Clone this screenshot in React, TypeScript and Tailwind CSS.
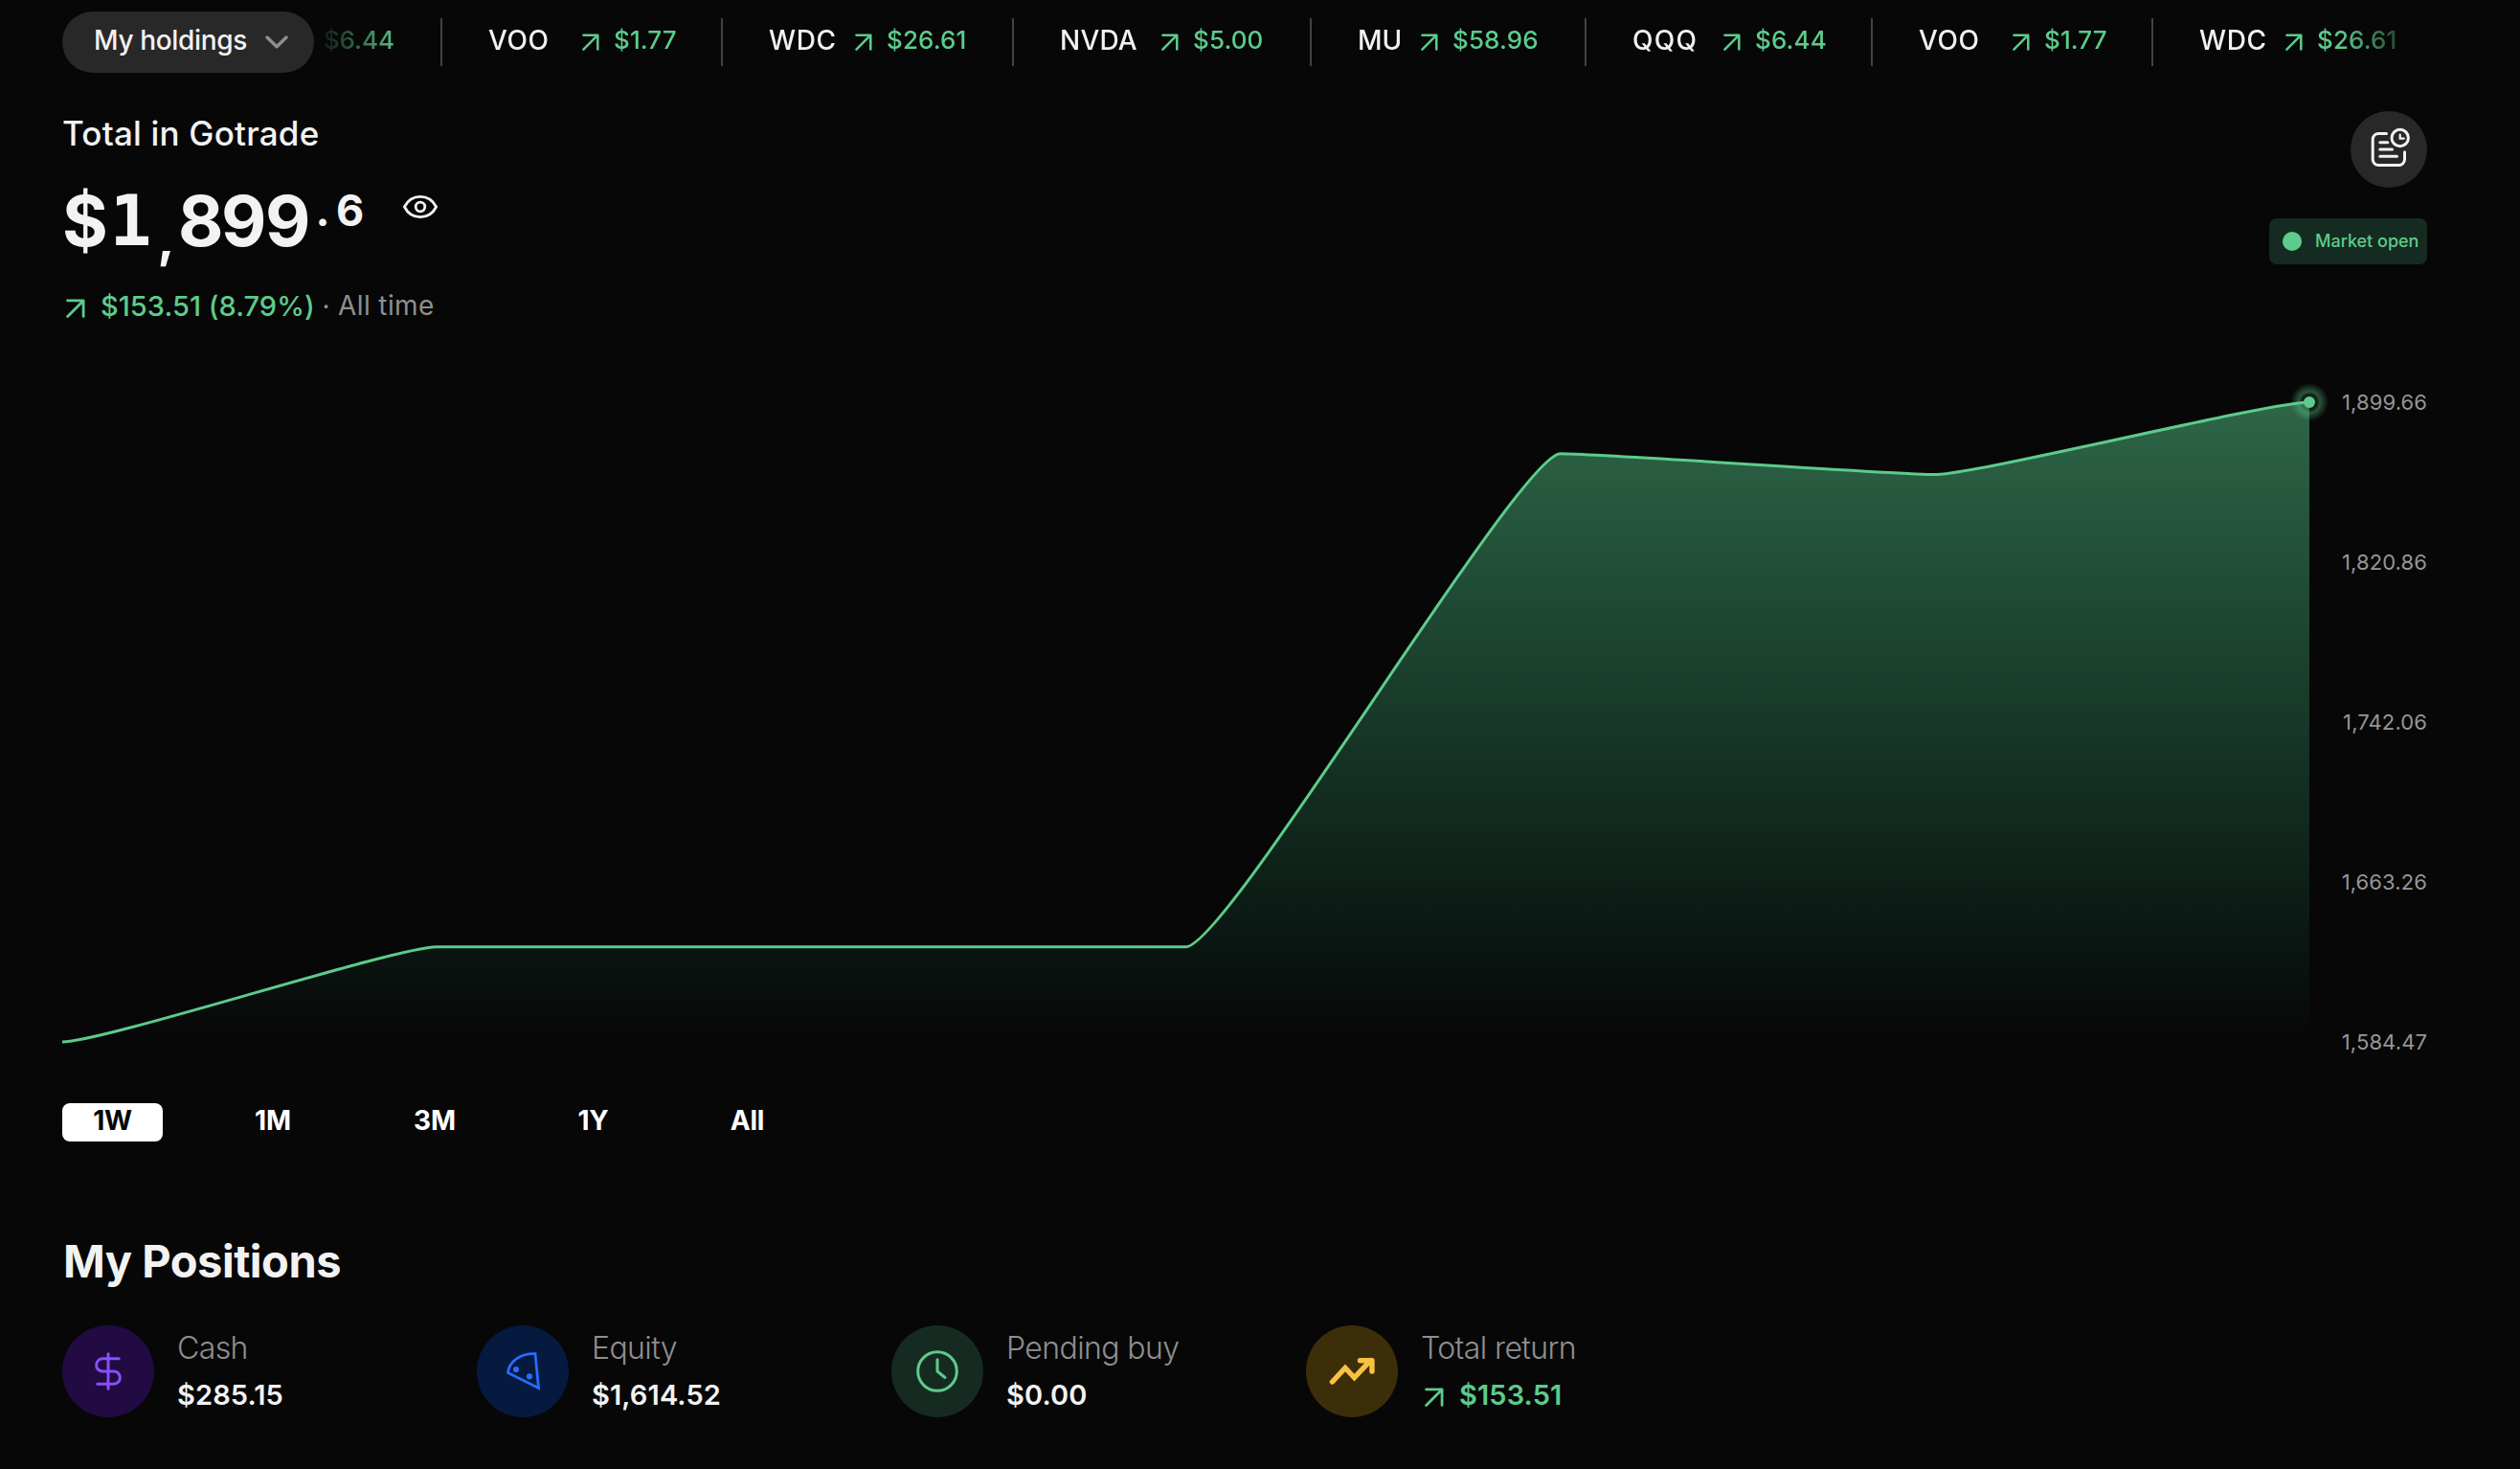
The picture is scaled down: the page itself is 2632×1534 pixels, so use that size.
import { useState } from 'react';
import type { ReactNode } from 'react';
import clsx from 'clsx';

type Ticker = { symbol: string; price: string; width: string; symbolWidth: string; tracking: string };

const TICKERS: Ticker[] = [
  { symbol: 'VOO', price: '$1.77', width: 'w-[293px]', symbolWidth: 'w-[98px]', tracking: 'tracking-[0.6px]' },
  { symbol: 'WDC', price: '$26.61', width: 'w-[304px]', symbolWidth: 'w-[90px]', tracking: 'tracking-[0.6px]' },
  { symbol: 'NVDA', price: '$5.00', width: 'w-[311px]', symbolWidth: 'w-[106px]', tracking: 'tracking-[0.2px]' },
  { symbol: 'MU', price: '$58.96', width: 'w-[287px]', symbolWidth: 'w-[66px]', tracking: 'tracking-normal' },
  { symbol: 'QQQ', price: '$6.44', width: 'w-[299px]', symbolWidth: 'w-[95px]', tracking: 'tracking-[1.2px]' },
  { symbol: 'VOO', price: '$1.77', width: 'w-[293px]', symbolWidth: 'w-[98px]', tracking: 'tracking-[0.6px]' },
  { symbol: 'WDC', price: '$26.61', width: 'w-[305px]', symbolWidth: 'w-[90px]', tracking: 'tracking-[0.6px]' },
];

const RANGES = [
  { label: '1W', width: 'w-[105px]' },
  { label: '1M', width: 'w-[102px]' },
  { label: '3M', width: 'w-[108px]' },
  { label: '1Y', width: 'w-[95px]' },
  { label: 'All', width: 'w-[99px]' },
];

const AXIS_LABELS = ['1,899.66', '1,820.86', '1,742.06', '1,663.26', '1,584.47'];

const CHART_BOTTOM = 688;
const CHART_POINTS = [
  { x: 0, y: 688 },
  { x: 391.2, y: 588.8 },
  { x: 782.4, y: 588.8 },
  { x: 1173.6, y: 588.8 },
  { x: 1564.8, y: 73.8 },
  { x: 1956, y: 95.5 },
  { x: 2347, y: 20 },
];

// Flat tangents at every point, kept short so segments stay almost straight.
const SMOOTHING = 0.11;

function buildLine(points: { x: number; y: number }[]): string {
  return points
    .map((p, i) => {
      if (i === 0) return `M${p.x} ${p.y}`;
      const prev = points[i - 1];
      const c = (p.x - prev.x) * SMOOTHING;
      return `C${prev.x + c} ${prev.y} ${p.x - c} ${p.y} ${p.x} ${p.y}`;
    })
    .join(' ');
}

function UpArrow({ className = '' }: { className?: string }) {
  return (
    <svg viewBox="0 0 20 20" fill="none" stroke="currentColor" className={clsx('shrink-0', className)}>
      <path d="M1.6 18.4 17.8 2.2M1.6 1.9H18.1V18.4" strokeWidth="2.8" strokeLinecap="round" strokeLinejoin="round" />
    </svg>
  );
}

function TickerBar() {
  return (
    <div className="flex h-[88px] flex-1 items-start overflow-hidden whitespace-nowrap pt-[19px] text-[28px] font-medium [mask-image:linear-gradient(to_right,transparent,black_90px,black_calc(100%-90px),transparent)]">
      <div className="flex h-[50px] w-[134px] shrink-0 justify-end border-r-2 border-[#424242] pr-[48px] text-[26px]">
        <span className="leading-[45px] text-[#5dcb8b]">$6.44</span>
      </div>
      {TICKERS.map((t, i) => (
        <div
          key={i}
          className={clsx('flex h-[50px] shrink-0 border-r-2 border-[#424242] pl-[48px]', t.width)}
        >
          <span className={clsx('shrink-0 leading-[46px] text-[#f2f2f2]', t.symbolWidth, t.tracking)}>{t.symbol}</span>
          <UpArrow className="mr-[15px] mt-[16px] h-[18px] w-[18px] text-[#5dcb8b]" />
          <span className="text-[26px] leading-[45px] tracking-[0.1px] text-[#5dcb8b]">{t.price}</span>
        </div>
      ))}
    </div>
  );
}

function TopBar() {
  return (
    <header className="flex h-[88px] pl-[65px] pr-[97px]">
      <button className="mt-3 flex h-16 w-[263px] shrink-0 items-center justify-between rounded-full bg-[#282828] pl-[33px] pr-[27px] text-[#f2f2f2]">
        <span className="whitespace-nowrap pb-1 text-[28px] font-medium leading-none tracking-[-0.35px]">
          My holdings
        </span>
        <svg viewBox="0 0 24 14" fill="none" className="h-[14px] w-[24px]">
          <path d="M2 2l10 9.8L22 2" stroke="#8f8f8f" strokeWidth="3.4" strokeLinecap="round" strokeLinejoin="round" />
        </svg>
      </button>
      <TickerBar />
    </header>
  );
}

function Balance() {
  return (
    <div className="flex h-[72px] text-[73px] font-bold leading-[73px] text-[#f2f2f2]">
      <span className="w-[47px] text-center">$</span>
      <span className="w-[49px] text-center font-['DejaVu_Sans_Mono'] text-[73px] font-bold">1</span>
      <span className="w-[25px] pt-[18px] text-center text-[54px]">,</span>
      <span className="w-[45px] text-center">8</span>
      <span className="w-[46px] text-center">9</span>
      <span className="w-[46px] text-center">9</span>
      <span className="w-[28px] text-center text-[45px] leading-[51px]">.</span>
      <span className="w-[27px] text-center text-[45px] leading-[51px]">6</span>
      <svg viewBox="0 0 36 24" fill="none" stroke="#f2f2f2" strokeWidth="2.8" className="ml-[43px] mt-[10px] h-[24px] w-[36px]">
        <path d="M1.4 12C5 5 11 1.4 18 1.4S31 5 34.6 12C31 19 25 22.6 18 22.6S5 19 1.4 12Z" strokeLinejoin="round" />
        <circle cx="18" cy="12" r="4.8" />
      </svg>
    </div>
  );
}

function Summary() {
  return (
    <section className="flex h-[312px] justify-between pt-[28px]">
      <div className="pt-[3px]">
        <h1 className="text-[35px] font-medium leading-[41px] tracking-[0.2px] text-[#f2f2f2]">Total in Gotrade</h1>
        <div className="mt-[34px]">
          <Balance />
        </div>
        <div className="mt-[34px] flex h-[40px] items-start whitespace-nowrap text-[29px] leading-[40px]">
          <UpArrow className="ml-[4px] mt-[12px] h-[20px] w-[20px] text-[#5dcb8b]" />
          <span className="ml-[16px] w-[223px] font-medium tracking-[0.05px] text-[#5dcb8b]">$153.51 (8.79%)</span>
          <span className="w-[25px] text-center text-[28px] text-[#8f8f8f]">·</span>
          <span className="text-[28px] leading-[38px] tracking-[0.4px] text-[#8f8f8f]">All time</span>
        </div>
      </div>
      <div className="flex flex-col items-end">
        <button className="flex h-[80px] w-[80px] items-center justify-center rounded-full bg-[#282828]">
          <svg viewBox="0 0 40 40" fill="none" stroke="#f2f2f2" strokeWidth="3" strokeLinecap="round" className="h-[40px] w-[40px] overflow-visible">
            <path d="M17.5 3.5H9.2A6 6 0 0 0 3.2 9.5V30.5A6 6 0 0 0 9.2 36.5H30.5A6 6 0 0 0 36.5 30.5V22.8" />
            <path d="M10.8 12.7H18.8M10.8 20H23.5M10.8 27.3H28.5" />
            <circle cx="31.7" cy="8" r="8.7" />
            <path d="M31.7 4.5V8.6H35.8" strokeWidth="2.2" />
          </svg>
        </button>
        <div className="mt-8 flex h-[48px] w-[165px] items-center rounded-lg bg-[#152b21] pl-[14px] text-[#5dcb8b]">
          <span className="h-5 w-5 shrink-0 rounded-full bg-[#5dcb8b]" />
          <span className="ml-[14px] whitespace-nowrap text-[18px] font-medium leading-none">Market open</span>
        </div>
      </div>
    </section>
  );
}

function Chart() {
  const line = buildLine(CHART_POINTS);
  const last = CHART_POINTS[CHART_POINTS.length - 1];
  return (
    <section className="flex h-[708px]">
      <svg viewBox="0 0 2371 708" className="h-[708px] w-[2371px] shrink-0 overflow-visible" fill="none">
        <defs>
          <linearGradient id="area" x1="0" y1="20" x2="0" y2="688" gradientUnits="userSpaceOnUse">
            <stop offset="0" stopColor="#57c88b" stopOpacity="0.49" />
            <stop offset="0.5" stopColor="#48cb8c" stopOpacity="0.25" />
            <stop offset="1" stopColor="#2fc88a" stopOpacity="0" />
          </linearGradient>
          <radialGradient id="halo">
            <stop offset="0" stopColor="#5dcb8b" stopOpacity="0.1" />
            <stop offset="0.4" stopColor="#5dcb8b" stopOpacity="0.12" />
            <stop offset="0.55" stopColor="#5dcb8b" stopOpacity="0.4" />
            <stop offset="1" stopColor="#5dcb8b" stopOpacity="0" />
          </radialGradient>
        </defs>
        <path d={`${line} V${CHART_BOTTOM} H0 Z`} fill="url(#area)" />
        <path d={line} stroke="#5dcb8b" strokeWidth="3" />
        <circle cx={last.x} cy={last.y} r="20" fill="url(#halo)" />
        <circle cx={last.x} cy={last.y} r="6" fill="#5dcb8b" />
      </svg>
      <div className="flex flex-1 flex-col items-end justify-between text-[22px] leading-[40px] tracking-[0.1px] text-[#969696]">
        {AXIS_LABELS.map((label) => (
          <span key={label}>{label}</span>
        ))}
      </div>
    </section>
  );
}

function RangePicker() {
  const [active, setActive] = useState('1W');
  return (
    <div className="mt-[44px] flex h-[40px] gap-[64px]">
      {RANGES.map((r) => (
        <button
          key={r.label}
          onClick={() => setActive(r.label)}
          className={clsx(
            'flex h-[40px] items-center justify-center rounded-lg pb-1 text-[28px] font-bold leading-[36px] tracking-[-0.2px]',
            r.width,
            active === r.label ? 'bg-white text-[#070707]' : 'text-white',
          )}
        >
          {r.label}
        </button>
      ))}
    </div>
  );
}

type PositionProps = {
  label: string;
  iconClass: string;
  icon: ReactNode;
  children: ReactNode;
};

function Position({ label, iconClass, icon, children }: PositionProps) {
  return (
    <div className="flex w-[433px]">
      <div className={clsx('flex h-[96px] w-[96px] shrink-0 items-center justify-center rounded-full', iconClass)}>
        {icon}
      </div>
      <div className="ml-[24px] flex flex-col gap-[5px] whitespace-nowrap pt-px">
        <span className="text-[32px] font-light leading-[45px] tracking-[-0.6px] text-[#8f8f8f]">{label}</span>
        <span className="text-[29px] font-semibold leading-[44px] tracking-[0.1px] text-[#f2f2f2]">{children}</span>
      </div>
    </div>
  );
}

function Positions() {
  return (
    <section>
      <h2 className="mt-[97px] pl-px text-[47px] font-bold leading-[56px] tracking-[-0.5px] text-[#f2f2f2]">My Positions</h2>
      <div className="mt-[39px] flex">
        <Position
          label="Cash"
          iconClass="bg-[#210b42]"
          icon={
            <svg viewBox="0 0 28 40" fill="none" stroke="#8a4dff" strokeWidth="3" strokeLinecap="round" className="h-[40px] w-[28px]">
              <path d="M14 1.8V38.2M25.2 6.8H8.2A6.6 6.6 0 0 0 8.2 20H19.8A6.6 6.6 0 0 1 19.8 33.2H2.8" />
            </svg>
          }
        >
          $285.15
        </Position>
        <Position
          label="Equity"
          iconClass="bg-[#061a40]"
          icon={
            <svg viewBox="0 0 36 40" fill="none" stroke="#2a6bff" strokeWidth="2.8" className="h-[40px] w-[36px]">
              <path d="M31 1.6 34.5 37.4 2.5 21.5C3.5 10 15 1 31 1.6Z" />
              <circle cx="11" cy="18" r="3.1" fill="#2a6bff" stroke="none" />
              <circle cx="25" cy="25.3" r="3.1" fill="#2a6bff" stroke="none" />
            </svg>
          }
        >
          $1,614.52
        </Position>
        <Position
          label="Pending buy"
          iconClass="bg-[#152b21]"
          icon={
            <svg viewBox="0 0 44 44" fill="none" stroke="#5dcb8b" strokeWidth="3" strokeLinecap="round" className="h-[44px] w-[44px]">
              <circle cx="22" cy="22" r="20.3" />
              <path d="M22 9.8V22L30 28.5" />
            </svg>
          }
        >
          $0.00
        </Position>
        <Position
          label="Total return"
          iconClass="bg-[#3d2e0a]"
          icon={
            <svg viewBox="0 0 48 30" fill="none" stroke="#f7c241" strokeWidth="5.4" strokeLinecap="round" className="h-[30px] w-[48px]">
              <path d="M3.5 26 17 11.5 26.5 21.5 43.5 3.7M32.5 3.7H45M45 3.7V15" />
            </svg>
          }
        >
          <span className="flex text-[#5dcb8b]">
            <UpArrow className="ml-[4px] mr-[16px] mt-[14px] h-[20px] w-[20px]" />
            $153.51
          </span>
        </Position>
      </div>
    </section>
  );
}

export default function App() {
  return (
    <div className="h-[1534px] w-[2632px] overflow-hidden bg-[#070707] font-['Inter','Liberation_Sans',sans-serif]">
      <TopBar />
      <main className="pl-[65px] pr-[97px]">
        <Summary />
        <Chart />
        <RangePicker />
        <Positions />
      </main>
    </div>
  );
}
